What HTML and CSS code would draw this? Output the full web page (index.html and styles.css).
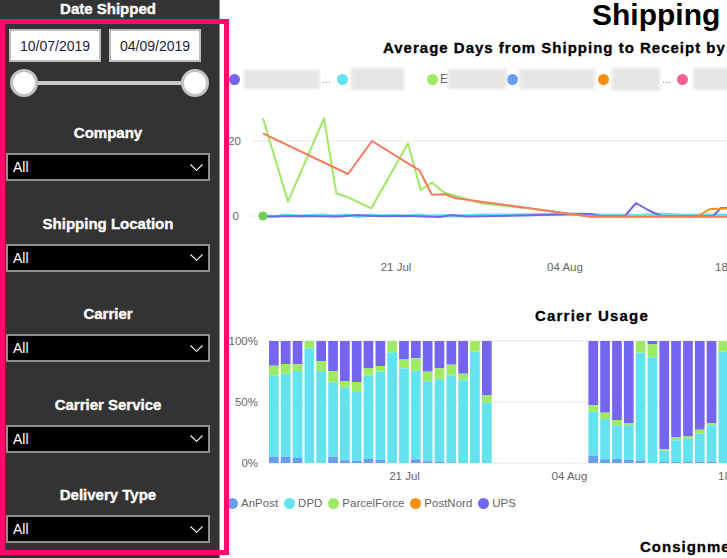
FILE: index.html
```html
<!DOCTYPE html>
<html>
<head>
<meta charset="utf-8">
<link rel="stylesheet" href="styles.css">
</head>
<body>
<div class="page">
  <aside class="sidebar">
    <div class="filter-title">Date Shipped</div>
    <div class="dates">
      <div class="datebox">10/07/2019</div>
      <div class="datebox">04/09/2019</div>
    </div>
    <div class="slider"><span class="knob"></span><span class="track"></span><span class="knob"></span></div>

    <div class="filter first">
      <div class="filter-title">Company</div>
      <div class="dropdown"><span>All</span><svg class="chev" width="13" height="7" viewBox="0 0 13 7"><polyline points="0.5,0.5 6.5,6.3 12.5,0.5"/></svg></div>
    </div>
    <div class="filter">
      <div class="filter-title">Shipping Location</div>
      <div class="dropdown"><span>All</span><svg class="chev" width="13" height="7" viewBox="0 0 13 7"><polyline points="0.5,0.5 6.5,6.3 12.5,0.5"/></svg></div>
    </div>
    <div class="filter">
      <div class="filter-title">Carrier</div>
      <div class="dropdown"><span>All</span><svg class="chev" width="13" height="7" viewBox="0 0 13 7"><polyline points="0.5,0.5 6.5,6.3 12.5,0.5"/></svg></div>
    </div>
    <div class="filter">
      <div class="filter-title">Carrier Service</div>
      <div class="dropdown"><span>All</span><svg class="chev" width="13" height="7" viewBox="0 0 13 7"><polyline points="0.5,0.5 6.5,6.3 12.5,0.5"/></svg></div>
    </div>
    <div class="filter">
      <div class="filter-title">Delivery Type</div>
      <div class="dropdown"><span>All</span><svg class="chev" width="13" height="7" viewBox="0 0 13 7"><polyline points="0.5,0.5 6.5,6.3 12.5,0.5"/></svg></div>
    </div>
  </aside>

  <main class="main">
    <h1 class="title">Shipping Dashboard</h1>
    <h2 class="chart-title avg-title">Average Days from Shipping to Receipt by Carrier</h2>

    <div class="legend-top">
      <div class="lt lt1"><span class="dot c-ups"></span><span class="blur b1"></span><span class="ell">...</span></div>
      <div class="lt lt2"><span class="dot c-dpd"></span><span class="blur b2"></span></div>
      <div class="lt lt3"><span class="dot c-pf"></span><span class="letter">E</span><span class="blur b3"></span></div>
      <div class="lt lt4"><span class="dot c-ap"></span><span class="blur b4"></span></div>
      <div class="lt lt5"><span class="dot c-pn"></span><span class="blur b5"></span><span class="ell">...</span></div>
      <div class="lt lt6"><span class="dot c-pink"></span><span class="blur b6"></span></div>
    </div>

    <svg class="line-chart" width="507" height="195" viewBox="220 90 507 195">
      <line class="grid" x1="251" y1="141" x2="727" y2="141"/>
      <line class="grid" x1="251" y1="216" x2="727" y2="216"/>
      <text class="axis" x="241" y="145" text-anchor="end">20</text>
      <text class="axis" x="239" y="220" text-anchor="end">0</text>
      <text class="axis" x="396" y="271" text-anchor="middle">21 Jul</text>
      <text class="axis" x="565" y="271" text-anchor="middle">04 Aug</text>
      <text class="axis" x="715" y="271">18</text>

      <polyline class="ln l-cyan" points="263,216 275,216.5 286,215 298,216 310,215.5 322,215 334,216 346,215 358,216.5 370,215 382,216 394,215.5 406,216 418,215 430,216 442,215.5 454,216 466,215.5 478,215 500,215 540,214.5 580,214 600,215 620,215 640,215.5 660,214 680,215 700,215 727,215"/>
      <polyline class="ln l-purple" points="263,216.5 300,216 340,216.5 358,215 370,216 410,216 440,217 452,215 466,216.5 500,216 540,215 580,214 591,214 600,216 625,216 636,203 648,210 661,216 700,216 713,216 721,208 727,208"/>
      <polyline class="ln l-orange" points="698,216 710,209 727,208.5"/>
      <polyline class="ln l-green" points="263,118.3 288,201.7 324,118.3 336.3,193.3 348,197.3 371.3,208.3 408,143.3 420.7,190 432,182.7 444.7,192.7 481.3,203.3 528,208.3 591.3,216.7 727,216.7"/>
      <polyline class="ln l-salmon" points="263,133.3 348,174 372,141 419.7,170.7 432,194.7 444.7,194.3 456.3,198.3 481.3,201.7 591.3,216.7 727,216.7"/>
      <circle class="start-dot" cx="263" cy="216" r="4.5"/>
    </svg>

    <h2 class="chart-title usage-title">Carrier Usage</h2>

    <svg class="bar-chart" width="507" height="155" viewBox="220 330 507 155">
      <line class="grid" x1="268" y1="341" x2="727" y2="341"/>
      <line class="grid" x1="268" y1="402" x2="727" y2="402"/>
      <line class="grid" x1="268" y1="463" x2="727" y2="463"/>
      <text class="axis" x="258" y="345" text-anchor="end">100%</text>
      <text class="axis" x="258" y="406" text-anchor="end">50%</text>
      <text class="axis" x="258" y="467" text-anchor="end">0%</text>
      <text class="axis" x="404.5" y="480" text-anchor="middle">21 Jul</text>
      <text class="axis" x="569.5" y="480" text-anchor="middle">04 Aug</text>
      <text class="axis" x="718" y="480">18</text>

      <g transform="translate(269 0)"><rect class="ups" y="341" width="9.7" height="24.7"/><rect class="pf" y="365.7" width="9.7" height="10"/><rect class="dpd" y="375.7" width="9.7" height="81"/><rect class="ap" y="456.7" width="9.7" height="6.3"/></g>
      <g transform="translate(280.8 0)"><rect class="ups" y="341" width="9.7" height="23"/><rect class="pf" y="364" width="9.7" height="9.7"/><rect class="dpd" y="373.7" width="9.7" height="83"/><rect class="ap" y="456.7" width="9.7" height="6.3"/></g>
      <g transform="translate(292.7 0)"><rect class="ups" y="341" width="9.7" height="23.3"/><rect class="pf" y="364.3" width="9.7" height="6.7"/><rect class="dpd" y="371" width="9.7" height="87"/><rect class="ap" y="458" width="9.7" height="5"/></g>
      <g transform="translate(304.5 0)"><rect class="pf" y="341" width="9.7" height="7.3"/><rect class="dpd" y="348.3" width="9.7" height="114.7"/></g>
      <g transform="translate(316.3 0)"><rect class="ups" y="341" width="9.7" height="20"/><rect class="pf" y="361" width="9.7" height="10"/><rect class="dpd" y="371" width="9.7" height="92"/></g>
      <g transform="translate(328.2 0)"><rect class="ups" y="341" width="9.7" height="30.3"/><rect class="pf" y="371.3" width="9.7" height="11"/><rect class="dpd" y="382.3" width="9.7" height="74.4"/><rect class="ap" y="456.7" width="9.7" height="6.3"/></g>
      <g transform="translate(340 0)"><rect class="ups" y="341" width="9.7" height="40"/><rect class="pf" y="381" width="9.7" height="6.7"/><rect class="dpd" y="387.7" width="9.7" height="72.6"/><rect class="ap" y="460.3" width="9.7" height="2.7"/></g>
      <g transform="translate(351.8 0)"><rect class="ups" y="341" width="9.7" height="41"/><rect class="pf" y="382" width="9.7" height="10"/><rect class="dpd" y="392" width="9.7" height="69"/><rect class="ap" y="461" width="9.7" height="2"/></g>
      <g transform="translate(363.6 0)"><rect class="ups" y="341" width="9.7" height="27"/><rect class="pf" y="368" width="9.7" height="7.7"/><rect class="dpd" y="375.7" width="9.7" height="83.3"/><rect class="ap" y="459" width="9.7" height="4"/></g>
      <g transform="translate(375.5 0)"><rect class="ups" y="341" width="9.7" height="25"/><rect class="pf" y="366" width="9.7" height="5.7"/><rect class="dpd" y="371.7" width="9.7" height="88.3"/><rect class="ap" y="460" width="9.7" height="3"/></g>
      <g transform="translate(387.3 0)"><rect class="pf" y="341" width="9.7" height="11.3"/><rect class="dpd" y="352.3" width="9.7" height="110.7"/></g>
      <g transform="translate(399.1 0)"><rect class="ups" y="341" width="9.7" height="18"/><rect class="pf" y="359" width="9.7" height="9.3"/><rect class="dpd" y="368.3" width="9.7" height="94.7"/></g>
      <g transform="translate(411 0)"><rect class="ups" y="341" width="9.7" height="17.3"/><rect class="pf" y="358.3" width="9.7" height="12.4"/><rect class="dpd" y="370.7" width="9.7" height="88.6"/><rect class="ap" y="459.3" width="9.7" height="3.7"/></g>
      <g transform="translate(422.8 0)"><rect class="ups" y="341" width="9.7" height="30.7"/><rect class="pf" y="371.7" width="9.7" height="9.6"/><rect class="dpd" y="381.3" width="9.7" height="80"/><rect class="ap" y="461.3" width="9.7" height="1.7"/></g>
      <g transform="translate(434.6 0)"><rect class="ups" y="341" width="9.7" height="27.3"/><rect class="pf" y="368.3" width="9.7" height="11"/><rect class="dpd" y="379.3" width="9.7" height="82.7"/><rect class="ap" y="462" width="9.7" height="1"/></g>
      <g transform="translate(446.5 0)"><rect class="ups" y="341" width="9.7" height="23.7"/><rect class="pf" y="364.7" width="9.7" height="10.6"/><rect class="dpd" y="375.3" width="9.7" height="87"/><rect class="ap" y="462.3" width="9.7" height="0.7"/></g>
      <g transform="translate(458.3 0)"><rect class="ups" y="341" width="9.7" height="32.7"/><rect class="pf" y="373.7" width="9.7" height="6.6"/><rect class="dpd" y="380.3" width="9.7" height="82.7"/></g>
      <g transform="translate(470.1 0)"><rect class="pf" y="341" width="9.7" height="10.7"/><rect class="dpd" y="351.7" width="9.7" height="111.3"/></g>
      <g transform="translate(482 0)"><rect class="ups" y="341" width="9.7" height="54"/><rect class="pf" y="395" width="9.7" height="7.7"/><rect class="dpd" y="402.7" width="9.7" height="60.3"/></g>

      <g transform="translate(588.4 0)"><rect class="ups" y="341" width="9.7" height="64.3"/><rect class="pf" y="405.3" width="9.7" height="6.4"/><rect class="dpd" y="411.7" width="9.7" height="44"/><rect class="ap" y="455.7" width="9.7" height="7.3"/></g>
      <g transform="translate(600.2 0)"><rect class="ups" y="341" width="9.7" height="71.7"/><rect class="pf" y="412.7" width="9.7" height="6.3"/><rect class="dpd" y="419" width="9.7" height="40.3"/><rect class="ap" y="459.3" width="9.7" height="3.7"/></g>
      <g transform="translate(612.1 0)"><rect class="ups" y="341" width="9.7" height="79"/><rect class="pf" y="420" width="9.7" height="5.3"/><rect class="dpd" y="425.3" width="9.7" height="33.7"/><rect class="ap" y="459" width="9.7" height="4"/></g>
      <g transform="translate(623.9 0)"><rect class="ups" y="341" width="9.7" height="82"/><rect class="pf" y="423" width="9.7" height="2.3"/><rect class="dpd" y="425.3" width="9.7" height="34.7"/><rect class="ap" y="460" width="9.7" height="3"/></g>
      <g transform="translate(635.7 0)"><rect class="pf" y="341" width="9.7" height="11.7"/><rect class="dpd" y="352.7" width="9.7" height="108"/><rect class="ap" y="460.7" width="9.7" height="2.3"/></g>
      <g transform="translate(647.6 0)"><rect class="ups" y="341" width="9.7" height="3"/><rect class="pf" y="344" width="9.7" height="13.3"/><rect class="dpd" y="357.3" width="9.7" height="105.7"/></g>
      <g transform="translate(659.4 0)"><rect class="ups" y="341" width="9.7" height="108"/><rect class="pf" y="449" width="9.7" height="1.7"/><rect class="dpd" y="450.7" width="9.7" height="11.3"/><rect class="ap" y="462" width="9.7" height="1"/></g>
      <g transform="translate(671.2 0)"><rect class="ups" y="341" width="9.7" height="96"/><rect class="pf" y="437" width="9.7" height="3.3"/><rect class="dpd" y="440.3" width="9.7" height="21.7"/><rect class="ap" y="462" width="9.7" height="1"/></g>
      <g transform="translate(683.1 0)"><rect class="ups" y="341" width="9.7" height="95"/><rect class="pf" y="436" width="9.7" height="2.7"/><rect class="dpd" y="438.7" width="9.7" height="23.3"/><rect class="ap" y="462" width="9.7" height="1"/></g>
      <g transform="translate(694.9 0)"><rect class="ups" y="341" width="9.7" height="88.7"/><rect class="pf" y="429.7" width="9.7" height="4"/><rect class="dpd" y="433.7" width="9.7" height="28"/><rect class="ap" y="461.7" width="9.7" height="1.3"/></g>
      <g transform="translate(706.7 0)"><rect class="ups" y="341" width="9.7" height="82"/><rect class="pf" y="423" width="9.7" height="2.3"/><rect class="dpd" y="425.3" width="9.7" height="36.4"/><rect class="ap" y="461.7" width="9.7" height="1.3"/></g>
      <g transform="translate(718.5 0)"><rect class="pf" y="341" width="9.7" height="10.7"/><rect class="dpd" y="351.7" width="9.7" height="111.3"/></g>
    </svg>

    <div class="legend-bottom">
      <div class="lb"><span class="dot c-ap"></span>AnPost</div>
      <div class="lb"><span class="dot c-dpd"></span>DPD</div>
      <div class="lb"><span class="dot c-pf"></span>ParcelForce</div>
      <div class="lb"><span class="dot c-pn"></span>PostNord</div>
      <div class="lb"><span class="dot c-ups"></span>UPS</div>
    </div>

    <h2 class="chart-title cons-title">Consignment Status</h2>
  </main>

  <div class="highlight"></div>
</div>
</body>
</html>
```
FILE: styles.css
```css
* { box-sizing: border-box; }
html, body { margin: 0; padding: 0; }
body {
  width: 727px;
  height: 558px;
  overflow: hidden;
  font-family: "Liberation Sans", Arial, sans-serif;
  background: #fff;
}
.page {
  position: relative;
  display: flex;
  width: 727px;
  height: 558px;
  overflow: hidden;
}

/* ---------- sidebar ---------- */
.sidebar {
  flex: 0 0 220px;
  height: 558px;
  background: #333333;
  border-right: 1px solid #8a8a8a;
  color: #fff;
}
.filter-title {
  font-weight: bold;
  font-size: 15px;
  line-height: 18px;
  text-align: center;
  color: #fff;
  width: 216px;
  -webkit-text-stroke: 0.35px #fff;
}
.dates {
  display: flex;
  gap: 8px;
  margin-top: 11px;
  padding-left: 9px;
}
.datebox {
  width: 92px;
  height: 33px;
  background: #fff;
  border: 2px solid #bdbdbd;
  color: #1c1c3a;
  font-size: 14px;
  display: flex;
  align-items: center;
  justify-content: center;
}
.slider {
  display: flex;
  align-items: center;
  margin-top: 7px;
  padding-left: 10px;
  height: 28px;
}
.knob {
  width: 28px;
  height: 28px;
  border-radius: 50%;
  background: #fff;
  border: 3px solid #c3c3c3;
  flex: 0 0 28px;
}
.track {
  width: 143px;
  height: 4px;
  background: #c8c8c8;
}
.filter { margin-bottom: 33.5px; }
.filter.first { margin-top: 27px; }
.dropdown {
  margin: 11px 9px 0 6px;
  height: 28px;
  background: #000;
  border: 2px solid #8f8f8f;
  display: flex;
  align-items: center;
  justify-content: space-between;
  padding: 0 5px;
  font-size: 14px;
  color: #fff;
}
.chev polyline {
  fill: none;
  stroke: #fff;
  stroke-width: 1.1;
}

/* ---------- main ---------- */
.main {
  flex: 1 1 auto;
  min-width: 0;
  overflow: hidden;
  background: #fff;
}
.title {
  margin: 0;
  padding-left: 372px;
  font-size: 30px;
  line-height: 30px;
  font-weight: bold;
  color: #000;
  white-space: nowrap;
  word-spacing: 4px;
}
.chart-title {
  margin: 0;
  font-size: 15px;
  line-height: 18px;
  font-weight: bold;
  letter-spacing: 1px;
  color: #000;
  white-space: nowrap;
  -webkit-text-stroke: 0.3px #000;
}
.avg-title { margin-top: 9px; padding-left: 163px; }
.usage-title { margin-top: 22px; padding-left: 315px; letter-spacing: 1.2px; }
.cons-title { margin-top: 26.5px; padding-left: 420px; }

.legend-top {
  display: flex;
  align-items: center;
  height: 22px;
  margin-top: 11px;
  padding-left: 9px;
  white-space: nowrap;
}
.lt { display: flex; align-items: center; flex: 0 0 auto; }
.lt1 { width: 108px; }
.lt2 { width: 90px; }
.lt3 { width: 80px; }
.lt4 { width: 91px; }
.lt5 { width: 79px; }
.lt6 { width: 60px; }
.dot {
  display: inline-block;
  width: 11px;
  height: 11px;
  border-radius: 50%;
  flex: 0 0 11px;
}
.blur {
  display: inline-block;
  height: 19px;
  background: #e6e6e6;
  filter: blur(1.8px);
  margin-left: 4px;
}
.b1 { width: 76px; }
.b2 { width: 53px; margin-left: 3px; height: 22px; }
.b3 { width: 59px; margin-left: 0; height: 20px; }
.b4 { width: 76px; margin-left: 1px; height: 20px; }
.b5 { width: 48px; margin-left: 3px; height: 23px; }
.b6 { width: 50px; margin-left: 5px; height: 22px; }
.letter { font-size: 12px; color: #666; margin-left: 2px; }
.ell { font-size: 11px; color: #888; margin-left: 2px; }

.c-ups { background: #7466f0; }
.c-dpd { background: #63e2ef; }
.c-pf { background: #9eeb63; }
.c-ap { background: #6a9cf0; }
.c-pn { background: #f7900f; }
.c-pink { background: #f2628c; }

svg { display: block; }
.grid { stroke: #e8e8e8; stroke-width: 1; }
.axis {
  font-family: "Liberation Sans", Arial, sans-serif;
  font-size: 11.5px;
  fill: #666;
}
.ln { fill: none; stroke-width: 2; stroke-linejoin: round; }
.l-cyan { stroke: #63e2ef; stroke-width: 3; }
.l-purple { stroke: #7466f0; }
.l-orange { stroke: #f7900f; }
.l-green { stroke: #9ee862; }
.l-salmon { stroke: #f47b5c; }
.start-dot { fill: #74d052; }

.line-chart { margin-top: 0; }
.bar-chart { margin-top: 5px; }
.ups { fill: #7466f0; }
.pf { fill: #9eeb63; }
.dpd { fill: #63e2ef; }
.ap { fill: #6a9cf0; }

.legend-bottom {
  display: flex;
  align-items: center;
  gap: 6px;
  height: 16px;
  margin-top: 10px;
  padding-left: 7px;
  font-size: 11.5px;
  color: #666;
  white-space: nowrap;
}
.lb { display: flex; align-items: center; gap: 3px; }

/* ---------- highlight overlay ---------- */
.highlight {
  position: absolute;
  left: 0;
  top: 19px;
  width: 229px;
  height: 536px;
  border: 5px solid #ff0a68;
  pointer-events: none;
}
```
